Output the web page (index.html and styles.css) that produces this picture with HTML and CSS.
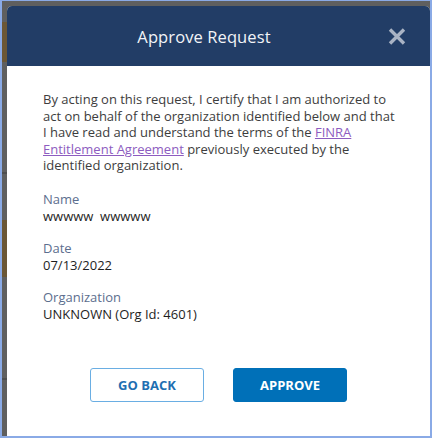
FILE: index.html
```html
<!DOCTYPE html>
<html lang="en">
<head>
<meta charset="utf-8">
<title>Approve Request</title>
<link rel="stylesheet" href="styles.css">
</head>
<body>
<div class="frame">
  <div class="backdrop">
    <div class="modal">
      <div class="modal-header">
        <h1 class="modal-title">Approve Request</h1>
        <button class="close" aria-label="Close">
          <svg width="18" height="17" viewBox="0 0 18 17"><path d="M2 1.5 L16 15.5 M16 1.5 L2 15.5" stroke="#a9b3c4" stroke-width="3.4" stroke-linecap="butt"/></svg>
        </button>
      </div>
      <div class="modal-body">
        <p class="statement">By acting on this request, I certify that I am authorized to act on behalf of the organization identified below and that I have read and understand the terms of the <a href="#" class="link">FINRA Entitlement Agreement</a> previously executed by the identified organization.</p>
        <div class="field">
          <div class="label">Name</div>
          <div class="value keep">wwwww  wwwww</div>
        </div>
        <div class="field">
          <div class="label">Date</div>
          <div class="value">07/13/2022</div>
        </div>
        <div class="field">
          <div class="label">Organization</div>
          <div class="value">UNKNOWN (Org Id: 4601)</div>
        </div>
      </div>
      <div class="modal-footer">
        <button class="btn btn-outline">GO BACK</button>
        <button class="btn btn-primary">APPROVE</button>
      </div>
    </div>
  </div>
</div>
</body>
</html>
```
FILE: styles.css
```css
* { box-sizing: border-box; }
html, body {
  margin: 0;
  padding: 0;
  width: 432px;
  height: 438px;
  overflow: hidden;
}
body {
  font-family: "Open Sans", "Noto Sans", sans-serif;
  background: #8aaae6;
}
.frame {
  width: 432px;
  height: 438px;
  padding: 1px 2px 2px 2px;
}
.backdrop {
  height: 100%;
  padding: 5px 0 0 5px;
  display: flex;
  background:
    linear-gradient(to bottom,
      #5f5f5f 0, #5f5f5f 21px,
      #6b5736 21px, #6b5736 61px,
      #5f5f5f 61px, #5f5f5f 171px,
      #4e4e4e 171px, #4e4e4e 173px,
      #5f5f5f 173px, #5f5f5f 219px,
      #6b5736 219px, #6b5736 276px,
      #5f5f5f 276px, #5f5f5f 377px,
      #4e4e4e 377px, #4e4e4e 379px,
      #5f5f5f 379px);
}
.modal {
  flex: 1;
  background: #ffffff;
  border-radius: 5px 5px 0 0;
  display: flex;
  flex-direction: column;
  overflow: hidden;
}
.modal-header {
  background: #223d66;
  height: 60px;
  display: flex;
  align-items: center;
  padding: 0 24px 0 24px;
}
.modal-title {
  flex: 1;
  margin: 0;
  text-align: center;
  font-size: 16.5px;
  font-weight: 400;
  color: #f2f4f7;
  letter-spacing: 0.1px;
}
.close {
  flex: none;
  background: none;
  border: 0;
  padding: 0;
  margin: 0 0 0 11px;
  width: 18px;
  height: 17px;
  display: flex;
}
.modal-body {
  padding: 25px 31px 0 36px;
  color: #3d3d3d;
  font-size: 13px;
  line-height: 16.6px;
}
.statement {
  margin: 0 0 17px 0;
}
.link {
  color: #8d5cc0;
  text-decoration: underline;
}
.field {
  margin-bottom: 15px;
}
.label {
  color: #5c6e8e;
  line-height: 17px;
}
.value {
  color: #1e1e1e;
  font-weight: 500;
  line-height: 17px;
}
.keep { white-space: pre; }
.modal-footer {
  margin-top: auto;
  display: flex;
  justify-content: center;
  gap: 29px;
  padding-bottom: 34px;
}
.btn {
  font-family: "Open Sans", "Noto Sans", sans-serif;
  font-size: 13px;
  font-weight: 700;
  width: 114px;
  height: 34px;
  border-radius: 3px;
  cursor: pointer;
}
.btn-outline {
  background: #fff;
  color: #1f6fb2;
  border: 1px solid #6aaee3;
}
.btn-primary {
  background: #0070b8;
  color: #fff;
  border: 1px solid #0070b8;
}
```
